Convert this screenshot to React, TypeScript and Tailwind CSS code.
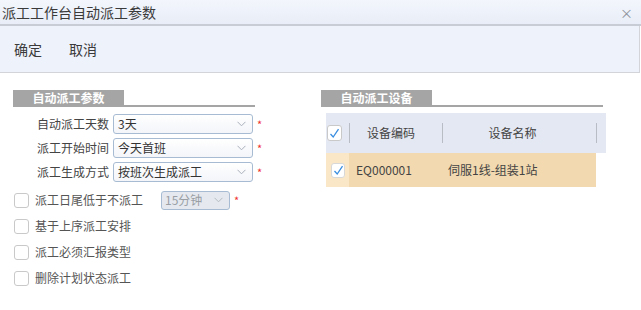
import React from "react";

const font = { fontFamily: '"Noto Sans CJK SC", "Liberation Sans", sans-serif' };

const Chevron = ({ color = "#a9b0bb" }: { color?: string }) => (
  <svg width="9" height="6" viewBox="0 0 9 6" className="shrink-0">
    <path d="M0.5 0.8 L4.5 4.8 L8.5 0.8" fill="none" stroke={color} strokeWidth="1" />
  </svg>
);

const Check = () => (
  <svg width="11" height="11" viewBox="0 0 11 11">
    <path d="M1.5 6 L4.2 9 L9.5 1.2" fill="none" stroke="#3a8ee0" strokeWidth="1.3" />
  </svg>
);

const Select = ({ value }: { value: string }) => (
  <div className="flex items-center justify-between w-[140px] h-[20px] pl-[4px] pr-[6px] border border-[#a7bcd3] rounded-[3px] bg-gradient-to-b from-white to-[#f3f5f9] text-[12px] text-[#333] shrink-0">
    <span>{value}</span>
    <Chevron />
  </div>
);

const Star = () => <span className="ml-[4px] text-[11px] text-[#f03030] leading-none shrink-0">*</span>;

const fields = [
  { label: "自动派工天数", value: "3天" },
  { label: "派工开始时间", value: "今天首班" },
  { label: "派工生成方式", value: "按班次生成派工" },
];

const options = ["基于上序派工安排", "派工必须汇报类型", "删除计划状态派工"];

const Box = () => (
  <div className="w-[15px] h-[15px] border border-[#c9c9c9] rounded-[3px] bg-white shrink-0" />
);

const TabHeader = ({ title, width }: { title: string; width: string }) => (
  <div className={`border-b-2 border-[#a5a5a5] ${width}`}>
    <div className="w-[111px] h-[15px] bg-[#a5a5a5] text-white text-[12px] font-bold leading-[15px] text-center">
      {title}
    </div>
  </div>
);

export default function App() {
  return (
    <div className="w-[641px] h-[310px] bg-white overflow-hidden" style={font}>
      {/* title bar */}
      <div className="h-[26px] flex items-center justify-between pl-[2px] pr-[8px] bg-gradient-to-b from-[#f3f6fc] to-[#e8edf7] border-b-2 border-[#c8ccd5]">
        <span className="text-[14px] text-[#3a3a3a]">派工工作台自动派工参数</span>
        <span className="text-[13px] text-[#8a8f99] leading-none">×</span>
      </div>

      {/* toolbar */}
      <div className="w-[640px] h-[47px] flex items-center gap-[27px] pl-[14px] bg-[#eef2fa] border-b border-r border-[#d2d4d9]">
        <span className="text-[14px] text-[#3a3a3a]">确定</span>
        <span className="text-[14px] text-[#3a3a3a]">取消</span>
      </div>

      <div className="flex pt-[17px]">
        {/* left panel */}
        <div className="ml-[13px] w-[242px] shrink-0">
          <TabHeader title="自动派工参数" width="w-[242px]" />
          <div className="mt-[7px] flex flex-col gap-[4px]">
            {fields.map((f) => (
              <div key={f.label} className="flex items-center h-[20px]">
                <span className="w-[96px] shrink-0 text-right text-[12px] text-[#444]">{f.label}</span>
                <div className="ml-[4px] shrink-0">
                  <Select value={f.value} />
                </div>
                <Star />
              </div>
            ))}
          </div>
          <div className="mt-[5px] flex flex-col">
            <div className="flex items-center h-[26px] pl-[1px]">
              <Box />
              <span className="ml-[6px] w-[126px] shrink-0 text-[12px] text-[#555]">派工日尾低于不派工</span>
              <div className="flex items-center justify-between w-[69px] h-[19px] shrink-0 pl-[3px] pr-[6px] border border-[#a7bcd3] rounded-[3px] bg-[#e5e9ef] text-[12px] text-[#9a9ea5]">
                <span>15分钟</span>
                <Chevron color="#b5bac2" />
              </div>
              <Star />
            </div>
            {options.map((o) => (
              <div key={o} className="flex items-center h-[26px] pl-[1px]">
                <Box />
                <span className="ml-[6px] text-[12px] text-[#555]">{o}</span>
              </div>
            ))}
          </div>
        </div>

        {/* right panel */}
        <div className="ml-[66px] w-[282px] shrink-0">
          <TabHeader title="自动派工设备" width="w-[282px]" />
          <div className="ml-[5px] mt-[6px] w-[280px]">
            <div className="flex items-center h-[40px] bg-[#e4e8f2] text-[12px] text-[#444]">
              <div className="w-[23px] flex items-center pl-[1px]">
                <div className="w-[15px] h-[16px] border border-[#c9c9c9] rounded-[3px] bg-white flex items-center justify-center">
                  <Check />
                </div>
              </div>
              <div className="w-px h-[20px] bg-[#b8bcc4]" />
              <div className="w-[92px] text-center pr-[10px]">设备编码</div>
              <div className="w-px h-[20px] bg-[#b8bcc4]" />
              <div className="w-[153px] text-center pr-[14px]">设备名称</div>
              <div className="w-px h-[20px] bg-[#b8bcc4]" />
            </div>
            <div className="flex items-center h-[34px] w-[270px] bg-[#f2d9af] text-[12px] text-[#444]">
              <div className="w-[23px] h-full flex items-center pl-[5px] bg-[#f9e7c8]">
                <div className="w-[14px] h-[15px] border border-[#d8d8d8] rounded-[3px] bg-white flex items-center justify-center">
                  <Check />
                </div>
              </div>
              <div className="w-[93px] pl-[7px]">EQ000001</div>
              <div className="pl-[6px]">伺服1线-组装1站</div>
            </div>
          </div>
        </div>
      </div>
    </div>
  );
}
